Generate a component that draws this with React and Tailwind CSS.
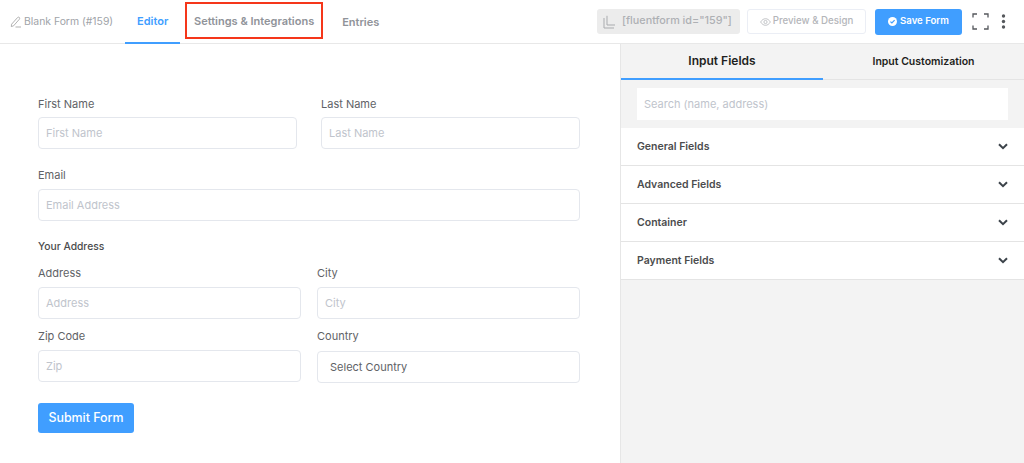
import React from "react";

const font = { fontFamily: "Inter, 'Liberation Sans', sans-serif" };

function Field({ label, placeholder, className = "", gap = "mt-[7px]" }) {
  return (
    <div className={className}>
      <div className="h-[14px] text-[11px] leading-[14px] text-[#606266]">{label}</div>
      <div className={`${gap} flex h-[32px] items-center rounded-[4px] border border-[#e4e7ed] bg-white pl-[7px] text-[11px] text-[#c0c4cc]`}>
        {placeholder}
      </div>
    </div>
  );
}

function Chevron() {
  return (
    <svg width="10" height="7" viewBox="0 0 10 7" fill="none" className="text-[#3c434a]">
      <path d="M1 1.2 5 5.2 9 1.2" stroke="currentColor" strokeWidth="2" />
    </svg>
  );
}

function Row({ label }) {
  return (
    <div className="flex h-[38px] items-center justify-between border-b border-[#e4e4e4] bg-white px-[16px] text-[10.5px] font-semibold text-[#4b4c4d]">
      <span className="pt-[1px]">{label}</span>
      <Chevron />
    </div>
  );
}

export default function App() {
  return (
    <div style={font} className="flex h-[463px] w-[1024px] flex-col overflow-hidden bg-white">
      <header className="flex h-[44px] shrink-0 items-center border-b border-[#e8e8e8] pl-[10px] pr-[18px]">
        <div className="flex items-center pt-[1px] text-[10.4px] text-[#a0a3a8]">
          <svg width="12" height="12" viewBox="0 0 12 12" fill="none" stroke="#a8a8a8" strokeWidth="0.9">
            <path d="M1.6 8.2 7.600 1.500c.5-.5 1.400-.5 1.800 0s.4 1.200 0 1.700L3.600 9.800 1.300 10.600z" />
            <path d="M5.500 11h5.500" />
          </svg>
          <span className="ml-[2px]">Blank Form (#159)</span>
        </div>
        <div className="ml-[12px] flex h-[44px] w-[55px] items-center justify-center border-b-2 border-[#409eff] pt-[1px] text-[11px] font-semibold text-[#409eff]">
          Editor
        </div>
        <div className="mb-[3px] ml-[5px] mt-[1px] flex h-[37px] w-[138px] items-center justify-center border-2 border-[#f5361a] pt-[1px] text-[11px] font-semibold text-[#909399]">
          Settings &amp; Integrations
        </div>
        <div className="ml-[19px] pt-[1px] text-[11px] font-semibold text-[#909399]">Entries</div>
        <div className="ml-auto flex items-center">
          <div className="flex h-[25px] w-[143px] items-center rounded-[3px] bg-[#ececec] pl-[6px] text-[10.8px] font-medium text-[#aeb0b4]">
            <svg width="13" height="14" viewBox="0 0 13 14" fill="none" stroke="#a9abae" strokeWidth="1">
              <path d="M1 3v10h10" />
              <path d="M4 .8v9.200h8" />
            </svg>
            <span className="ml-[6px] whitespace-nowrap">[fluentform id="159"]</span>
          </div>
          <div className="ml-[7px] flex h-[25px] w-[119px] items-center justify-center rounded-[3px] border border-[#ebeef5] text-[9.7px] font-medium text-[#b4b6ba]">
            <svg width="11" height="8" viewBox="0 0 11 8" fill="none" stroke="#b4b6ba" strokeWidth="0.8">
              <path d="M.6 4C2 1.800 3.600.7 5.500.7S9 1.800 10.400 4C9 6.200 7.400 7.300 5.500 7.300S2 6.200.6 4z" />
              <circle cx="5.500" cy="4" r="1.600" />
            </svg>
            <span className="ml-[2px]">Preview &amp; Design</span>
          </div>
          <div className="ml-[9px] flex h-[26px] w-[87px] items-center justify-center rounded-[3px] bg-[#409eff] text-[9.6px] font-semibold text-white">
            <svg width="9" height="9" viewBox="0 0 9 9">
              <circle cx="4.500" cy="4.500" r="4.500" fill="white" />
              <path d="M2.400 4.600 3.900 6 6.600 3.200" fill="none" stroke="#409eff" strokeWidth="1.200" />
            </svg>
            <span className="ml-[3px]">Save Form</span>
          </div>
          <svg className="ml-[10px]" width="17" height="17" viewBox="0 0 17 17" fill="none" stroke="#55585c" strokeWidth="1.3">
            <path d="M1 4.500V1h4M12 1h4v3.500M16 12.500V16h-4M5 16H1v-3.500" />
          </svg>
          <svg className="ml-[12px]" width="5" height="15" viewBox="0 0 5 15" fill="#55585c">
            <circle cx="2.500" cy="2" r="1.700" />
            <circle cx="2.500" cy="7.500" r="1.700" />
            <circle cx="2.500" cy="13" r="1.700" />
          </svg>
        </div>
      </header>

      <div className="flex min-h-0 flex-1">
        <main className="w-[620px] shrink-0 pl-[38px] pr-[40px] pt-[53px]">
          <div className="flex gap-[24px]">
            <Field className="w-[259px]" gap="mt-[6px]" label="First Name" placeholder="First Name" />
            <Field className="w-[259px]" gap="mt-[6px]" label="Last Name" placeholder="Last Name" />
          </div>
          <Field className="mt-[19px]" label="Email" placeholder="Email Address" />
          <div className="mt-[18px] h-[14px] text-[10.3px] font-medium leading-[14px] text-[#4b4c4d]">Your Address</div>
          <div className="mt-[13px] flex gap-[16px]">
            <Field className="w-[263px]" label="Address" placeholder="Address" />
            <Field className="w-[263px]" label="City" placeholder="City" />
          </div>
          <div className="mt-[10px] flex gap-[16px]">
            <Field className="w-[263px]" label="Zip Code" placeholder="Zip" />
            <div className="w-[263px]">
              <div className="h-[14px] text-[11px] leading-[14px] text-[#606266]">Country</div>
              <div className="mt-[8px] flex h-[32px] items-center rounded-[4px] border border-[#e4e7ed] pl-[12px] text-[11px] text-[#606266]">
                Select Country
              </div>
            </div>
          </div>
          <div className="mt-[20px] flex h-[30px] w-[96px] items-center justify-center rounded-[3px] bg-[#409eff] text-[12.400px] font-medium text-white">
            Submit Form
          </div>
        </main>

        <aside className="flex-1 border-l border-[#e6e6e6] bg-[#f3f3f3]">
          <div className="flex h-[36px] text-[#1e1f21]">
            <div className="flex w-[202px] items-center justify-center border-b-2 border-[#409eff] text-[12px] font-semibold">
              Input Fields
            </div>
            <div className="flex flex-1 items-center justify-center border-b border-[#e4e4e4] text-[10.5px] font-semibold">
              Input Customization
            </div>
          </div>
          <div className="p-[8px_16px]">
            <div className="flex h-[32px] items-center bg-white pl-[7px] pt-[1px] text-[11px] text-[#c0c4cc]">
              Search (name, address)
            </div>
          </div>
          <Row label="General Fields" />
          <Row label="Advanced Fields" />
          <Row label="Container" />
          <Row label="Payment Fields" />
        </aside>
      </div>
    </div>
  );
}
